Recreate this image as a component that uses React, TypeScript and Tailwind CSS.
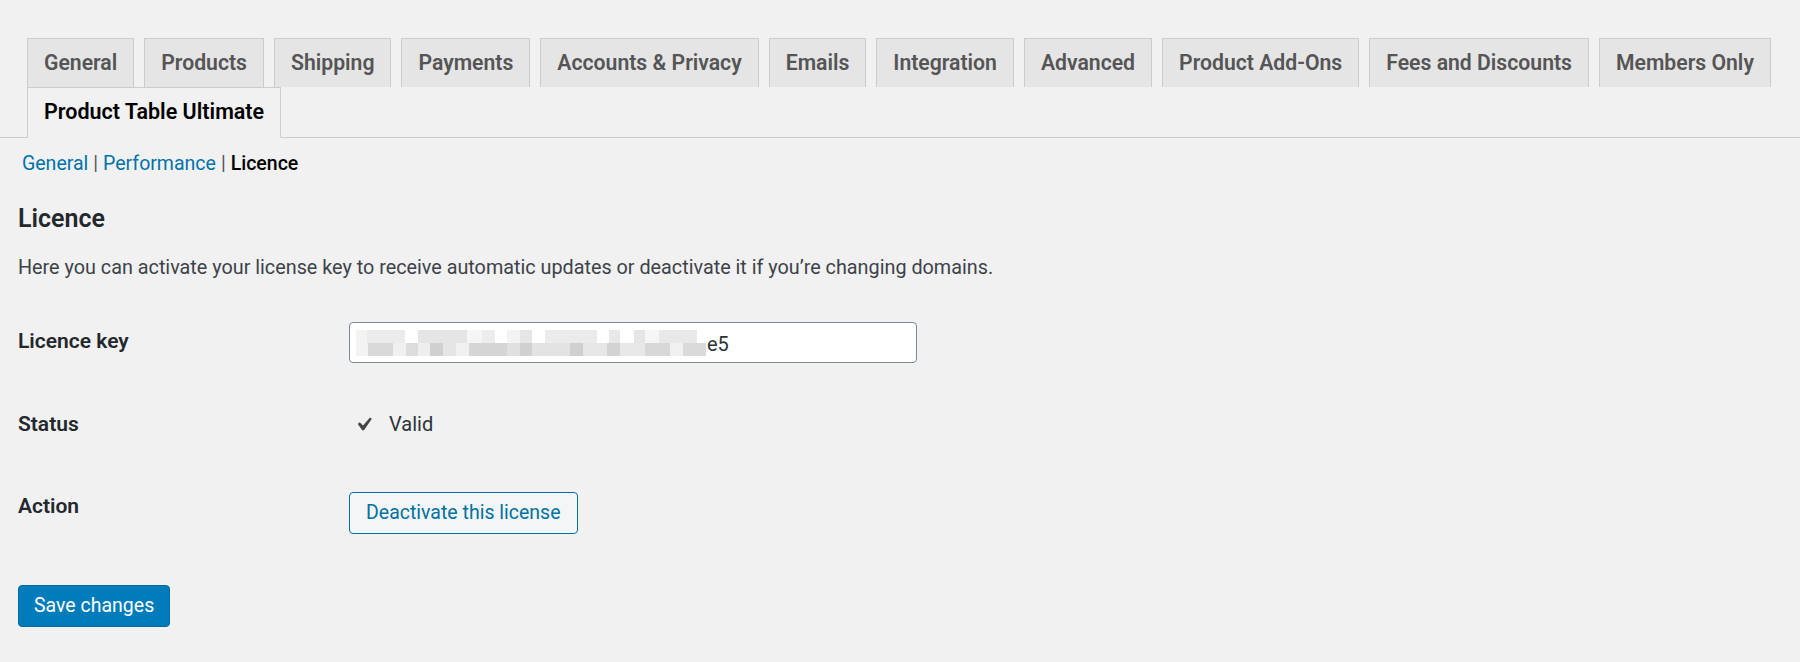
const tabs = [
  'General',
  'Products',
  'Shipping',
  'Payments',
  'Accounts & Privacy',
  'Emails',
  'Integration',
  'Advanced',
  'Product Add-Ons',
  'Fees and Discounts',
  'Members Only',
];

// pixelated (blurred) licence key, [width, colour]
const keyTop: [number, string][] = [
  [11, '#f3f3f3'], [38, '#ebebeb'], [13, '#ffffff'], [49, '#e5e5e5'], [15, '#f5f5f5'],
  [13, '#ececec'], [12, '#ffffff'], [13, '#f3f3f3'], [12, '#e6e6e6'], [13, '#ffffff'],
  [52, '#ebebeb'], [12, '#ffffff'], [11, '#e8e8e8'], [14, '#ffffff'], [11, '#e5e5e5'],
  [14, '#f5f5f5'], [38, '#e8e8e8'], [10, '#ffffff'],
];
const keyBottom: [number, string][] = [
  [12, '#f3f3f3'], [25, '#d9d9d9'], [13, '#f0f0f0'], [12, '#dcdcdc'], [12, '#eeeeee'],
  [13, '#d0d0d0'], [13, '#e5e5e5'], [13, '#f0f0f0'], [38, '#d5d5d5'], [13, '#e0e0e0'],
  [12, '#d0d0d0'], [38, '#e3e3e3'], [13, '#d0d0d0'], [24, '#e6e6e6'], [13, '#d3d3d3'],
  [25, '#e8e8e8'], [25, '#d8d8d8'], [13, '#f0f0f0'], [23, '#dadada'],
];

function CheckIcon() {
  return (
    <svg viewBox="0 0 20 20" className="w-[27px] h-[27px] text-[#444]" fill="currentColor">
      <path d="M14.83 4.89l1.34.94-5.81 8.38H9.02L5.78 9.67l1.34-1.25 2.57 2.4z" />
    </svg>
  );
}

export default function App() {
  return (
    <div className="min-h-screen bg-[#f1f1f1] font-['Roboto','Liberation_Sans',sans-serif] text-[#23282d]">
      {/* Settings tabs */}
      <nav className="pt-[38px] pl-[17px] flex flex-wrap border-b border-[#ccc]">
        {tabs.map((tab) => (
          <span
            key={tab}
            className="ml-[10px] h-[49px] px-[16px] flex items-center border border-b-0 border-[#ccc] bg-[#e5e5e5] text-[21.2px] font-semibold text-[#555] whitespace-nowrap"
          >
            {tab}
          </span>
        ))}
        <div className="basis-full h-0" />
        <span className="ml-[10px] h-[51px] -mb-px px-[16px] flex items-center border border-[#ccc] border-b-[#f1f1f1] bg-[#f1f1f1] text-[21.5px] font-semibold text-black whitespace-nowrap">
          Product Table Ultimate
        </span>
      </nav>

      <div className="pl-[18px]">
        {/* Sub navigation */}
        <div className="mt-[12px] pl-[4px] h-[28px] leading-[28px] text-[19.5px] text-[#555]">
          <a className="text-[#0073aa]">General</a>
          <span className="mx-[5px]">|</span>
          <a className="text-[#0073aa]">Performance</a>
          <span className="mx-[5px]">|</span>
          <span className="font-medium text-black">Licence</span>
        </div>

        <h2 className="mt-[25px] h-[32px] leading-[32px] text-[25px] font-semibold text-[#23282d]">Licence</h2>

        <p className="mt-[19px] h-[28px] leading-[28px] text-[19.8px] text-[#3c434a]">
          Here you can activate your license key to receive automatic updates or deactivate it if you’re changing domains.
        </p>

        {/* Form table */}
        <div className="mt-[40px] grid grid-cols-[331px_1fr] text-[20px] leading-[28px]">
          <div className="pt-[5px] text-[21px] font-semibold">Licence key</div>
          <div className="w-[568px] h-[41px] flex items-center pl-[6px] bg-white border border-[#7e8993] rounded-[4px]">
            <div className="flex flex-col">
              <div className="flex h-[13px]">
                {keyTop.map(([w, c], i) => (
                  <span key={i} className="h-full" style={{ width: w, backgroundColor: c }} />
                ))}
              </div>
              <div className="flex h-[13px]">
                {keyBottom.map(([w, c], i) => (
                  <span key={i} className="h-full" style={{ width: w, backgroundColor: c }} />
                ))}
              </div>
            </div>
            <span className="self-end mb-[6px] text-[20px] leading-[24px] text-[#2c3338]">e5</span>
          </div>

          <div className="mt-[47px] text-[21px] font-semibold">Status</div>
          <div className="mt-[47px] pl-[1px] flex items-center gap-[12px] text-[#2c3338]">
            <CheckIcon />
            <span>Valid</span>
          </div>

          <div className="mt-[54px] text-[21px] font-semibold">Action</div>
          <div className="mt-[54px]">
            <button className="h-[42px] px-[16px] border border-[#0071a1] rounded-[4px] bg-[#f3f5f6] text-[19.5px] text-[#0071a1]">
              Deactivate this license
            </button>
          </div>
        </div>

        <button className="mt-[51px] h-[42px] px-[15px] border border-[#006ba1] rounded-[4px] bg-[#007cba] text-[19.5px] text-white">
          Save changes
        </button>
      </div>
    </div>
  );
}
